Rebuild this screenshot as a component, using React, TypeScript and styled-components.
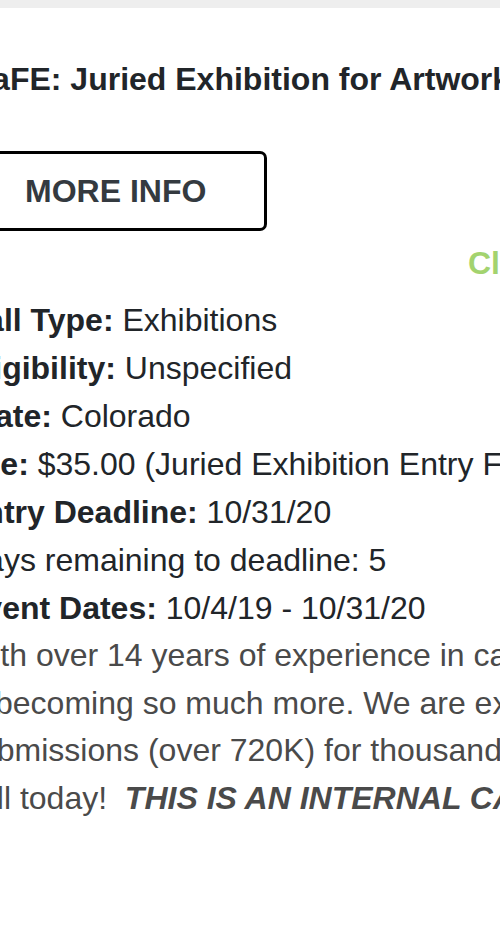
import React from "react";
import styled, { createGlobalStyle } from "styled-components";

const Global = createGlobalStyle`
  html, body { margin: 0; padding: 0; background: #ffffff; }
  body { overflow: hidden; font-family: "Liberation Sans", Arial, Helvetica, sans-serif; }
`;

const Page = styled.div`
  width: 500px;
  height: 930px;
  overflow: hidden;
  background: #ffffff;
`;

const TopBar = styled.div`
  height: 8px;
  background: #eeeeee;
`;

const Content = styled.main`
  margin-left: -37px;
  padding-top: 52px;
  display: flex;
  flex-direction: column;
  align-items: flex-start;
  white-space: nowrap;
`;

const Title = styled.h1`
  margin: 0 0 0 6px;
  font-size: 32px;
  line-height: 1.2;
  font-weight: 700;
  color: #212529;
`;

const InfoButton = styled.a`
  margin-top: 53px;
  display: inline-block;
  box-sizing: border-box;
  padding: 13px 58px 13px 59px;
  border: 3px solid #000000;
  border-radius: 7px;
  font-size: 32px;
  line-height: 48px;
  font-weight: 700;
  color: #343a40;
  text-decoration: none;
  text-transform: uppercase;
`;

const StatusRow = styled.div`
  margin-top: 8px;
  padding-left: 505px;
  font-size: 32px;
  line-height: 48px;
  font-weight: 700;
  color: #a3d36f;
`;

const Details = styled.ul`
  list-style: none;
  margin: 9px 0 0;
  padding: 0;
`;

const Row = styled.li`
  font-size: 32px;
  line-height: 48px;
  color: #212529;
`;

const Label = styled.strong`
  font-weight: 700;
`;

const Description = styled.p`
  margin: 0;
  font-size: 32px;
  line-height: 47.5px;
  color: #4a4a4a;
`;

const Emph = styled.strong`
  font-weight: 700;
  font-style: italic;
`;

const details: { label?: string; value: string }[] = [
  { label: "Call Type:", value: "Exhibitions" },
  { label: "Eligibility:", value: "Unspecified" },
  { label: "State:", value: "Colorado" },
  { label: "Fee:", value: "$35.00 (Juried Exhibition Entry Fee)" },
  { label: "Entry Deadline:", value: "10/31/20" },
  { value: "Days remaining to deadline: 5" },
  { label: "Event Dates:", value: "10/4/19 - 10/31/20" },
];

export default function App() {
  return (
    <>
      <Global />
      <Page>
        <TopBar />
        <Content>
          <Title>CaFE: Juried Exhibition for Artworks</Title>
          <InfoButton href="#">More Info</InfoButton>
          <StatusRow>Closing Soon</StatusRow>
          <Details>
            {details.map((d, i) => (
              <Row key={i}>
                {d.label && <Label>{d.label}</Label>}
                {d.label ? " " : ""}
                {d.value}
              </Row>
            ))}
          </Details>
          <Description>
            With over 14 years of experience in call-for-entry management, CaFE
            <br />
            is becoming so much more. We are excited to share
            <br />
            submissions (over 720K) for thousands of calls
            <br />
            call today!{"\u00a0 "}
            <Emph>THIS IS AN INTERNAL CALL</Emph>
          </Description>
        </Content>
      </Page>
    </>
  );
}
